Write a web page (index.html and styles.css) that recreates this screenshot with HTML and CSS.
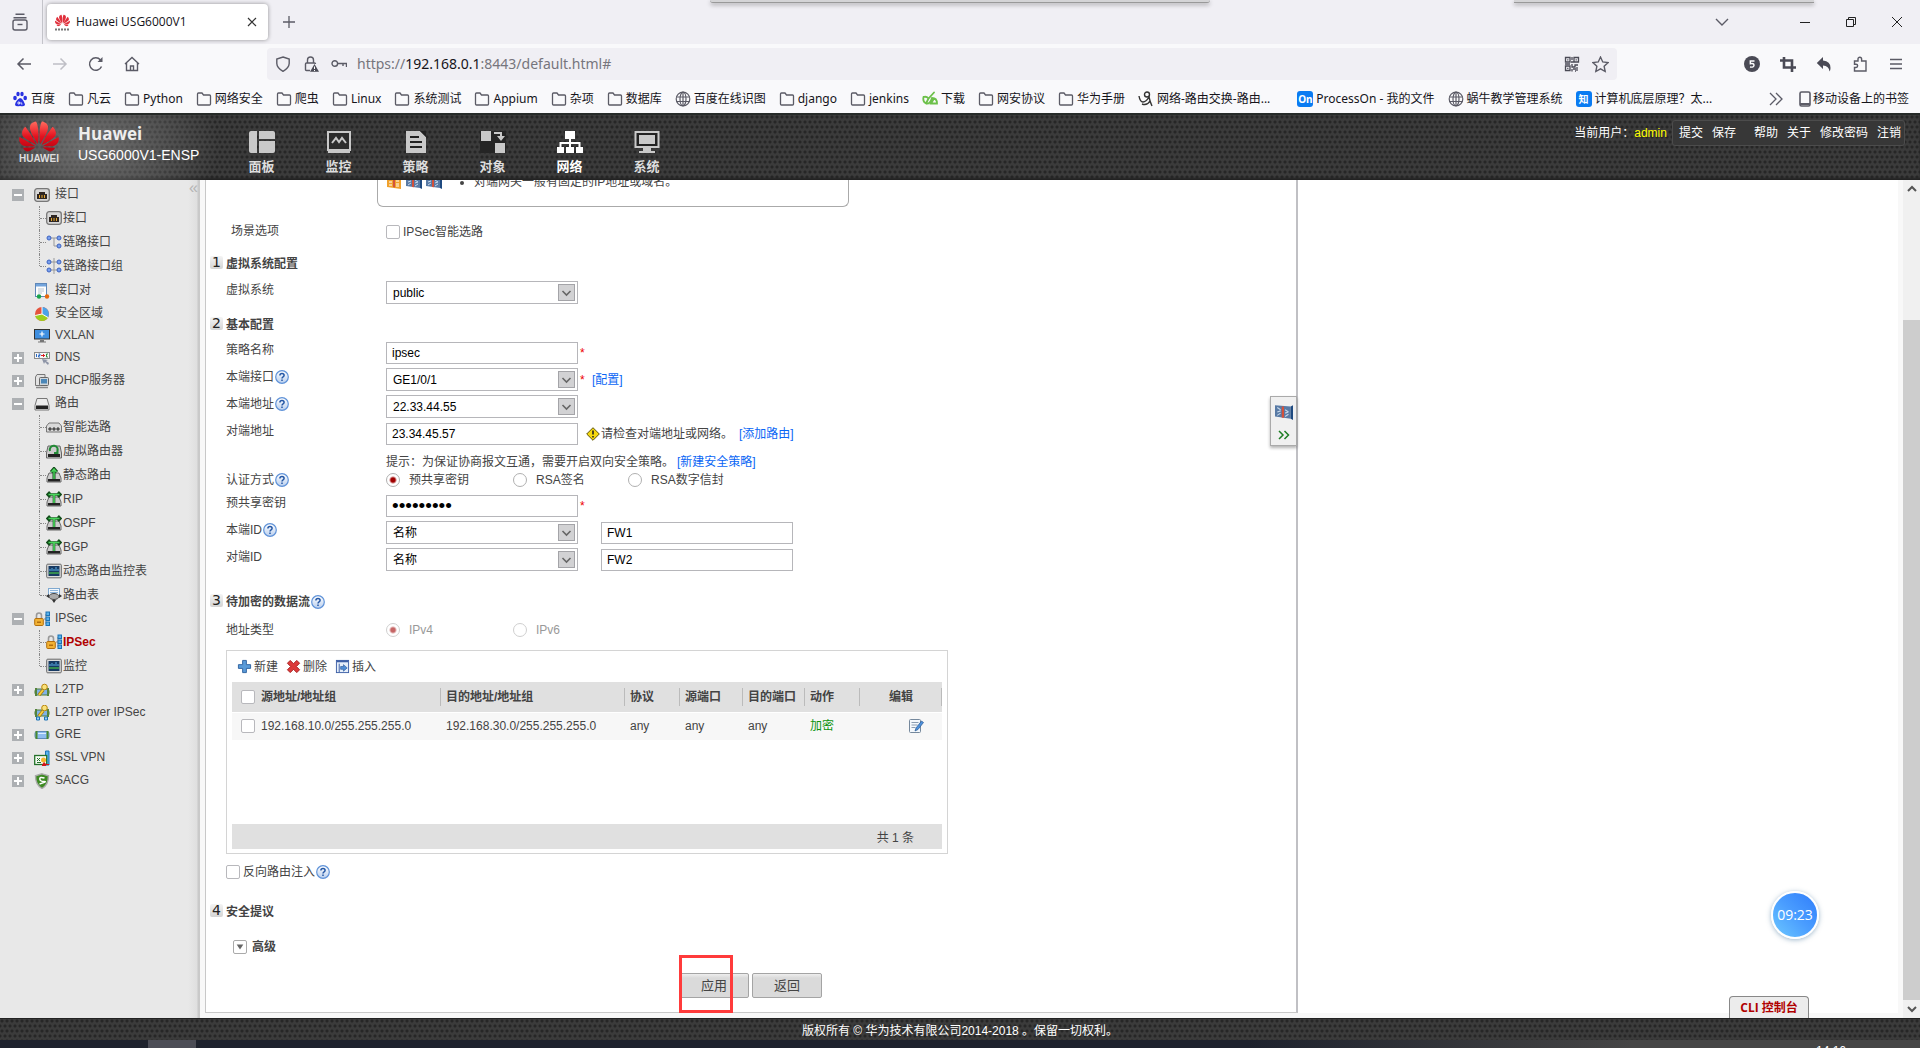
FILE: index.html
```html
<!DOCTYPE html>
<html lang="zh-CN">
<head>
<meta charset="utf-8">
<title>Huawei USG6000V1</title>
<link rel="stylesheet" href="styles.css">
</head>
<body>
<svg class="defs" aria-hidden="true">
  <linearGradient id="redGrad" x1="0" y1="0" x2="0" y2="1"><stop offset="0" stop-color="#ff6a5e"/><stop offset=".5" stop-color="#e3121f"/><stop offset="1" stop-color="#b8000f"/></linearGradient>
  <linearGradient id="helpGrad" x1="0" y1="0" x2="0" y2="1"><stop offset="0" stop-color="#fff"/><stop offset="1" stop-color="#b9cfee"/></linearGradient>
  <symbol id="huawei" viewBox="0 2 24 20"><path d="M3.67 6.14S1.82 7.91 1.72 9.78v.35c.08 1.51 1.22 2.4 1.22 2.4 1.83 1.79 6.26 4.04 7.3 4.55 0 0 .06.03.1-.01l.02-.04v-.04C7.52 10.8 3.67 6.14 3.67 6.14zM9.65 18.6c-.02-.08-.1-.08-.1-.08l-7.38.26c.8 1.43 2.15 2.53 3.56 2.2.96-.25 3.16-1.78 3.88-2.3.06-.05.04-.09.04-.09zm.08-.78C6.49 15.63.21 12.28.21 12.28c-.15.46-.2.9-.21 1.3v.07c0 1.07.4 1.82.4 1.82.8 1.69 2.34 2.2 2.34 2.2.7.3 1.4.31 1.4.31.12.02 4.4 0 5.54 0 .05 0 .08-.05.08-.05v-.06c0-.03-.03-.05-.03-.05zM9.06 3.19a3.42 3.42 0 00-2.57 3.15v.41c.03.6.16 1.05.16 1.05.66 2.9 3.86 7.65 4.55 8.65.05.05.1.03.1.03a.1.1 0 00.06-.1c1.06-10.6-1.11-13.42-1.11-13.42-.32.02-1.19.23-1.19.23zm8.299 2.27s-.49-1.8-2.44-2.28c0 0-.57-.14-1.17-.22 0 0-2.18 2.81-1.12 13.43.01.07.06.08.06.08.07.03.1-.03.1-.03.72-1.03 3.9-5.76 4.55-8.64 0 0 .36-1.4.02-2.34zm-2.92 13.07s-.07 0-.09.05c0 0-.01.07.03.1.7.51 2.85 2 3.88 2.3 0 0 .16.05.43.06h.14c.69-.02 1.9-.37 3-2.26l-7.4-.25zm7.83-8.41c.14-2.06-1.94-3.97-1.94-3.98 0 0-3.85 4.66-6.67 10.8 0 0-.03.08.02.13l.04.01h.06c1.06-.53 5.46-2.77 7.28-4.54 0 0 1.15-.93 1.21-2.42zm1.52 2.14s-6.28 3.37-9.52 5.55c0 0-.05.04-.03.11 0 0 .03.06.07.06 1.16 0 5.56 0 5.67-.02 0 0 .57-.02 1.27-.29 0 0 1.56-.5 2.37-2.27 0 0 .73-1.45.17-3.14z"/></symbol>
  <symbol id="folder" viewBox="0 0 16 16"><path d="M1.500 13V3Q1.500 2 2.500 2H6l1.500 2H13.500q1 0 1 1v8q0 1-1 1h-11q-1 0-1-1z" fill="none" stroke="#5b5b66" stroke-width="1.300"/></symbol>
  <symbol id="globe" viewBox="0 0 16 16"><g fill="none" stroke="#5b5b66" stroke-width="1.200"><circle cx="8" cy="8" r="6.800"/><ellipse cx="8" cy="8" rx="3" ry="6.800"/><path d="M1.500 6h13M1.500 10.500h13M8 1v14"/></g></symbol>
  <symbol id="help" viewBox="0 0 14 14"><circle cx="7" cy="7" r="6.300" fill="url(#helpGrad)" stroke="#5f92d8" stroke-width="1.200"/><path d="M4.900 5.500Q4.900 3.500 7 3.500t2.100 1.800q0 1-1 1.600T7 8.500M7 9.500v1.400" fill="none" stroke="#2457a5" stroke-width="1.500"/></symbol>
  <symbol id="chev" viewBox="0 0 17 17"><rect x=".5" y=".5" width="16" height="16" fill="#d2d2d4" stroke="#a4a4a8"/><path d="M4.500 7l4 4 4-4" fill="none" stroke="#666" stroke-width="1.600"/></symbol>
  <symbol id="port" viewBox="0 0 16 16"><rect x=".7" y="1.700" width="14.600" height="12.600" rx="2.500" fill="#d7d7d7" stroke="#777" stroke-width="1.300"/><path d="M3 12V7h2V5h6v2h2v5z" fill="#2e2622"/><path d="M5.500 8v3M8 8v3M10.500 8v3" stroke="#e9a92d"/></symbol>
  <symbol id="links" viewBox="0 0 16 16"><path d="M3 4h9M8 4v8h5" fill="none" stroke="#999"/><g fill="#7aa0ee" stroke="#3c62c0"><circle cx="3" cy="4" r="2"/><circle cx="13" cy="4" r="2"/><circle cx="13" cy="12" r="2"/></g></symbol>
  <symbol id="linkg" viewBox="0 0 16 16"><path d="M3 4h10M3 12h10M8 0v16" fill="none" stroke="#999"/><g fill="#7aa0ee" stroke="#3c62c0"><circle cx="3" cy="4" r="2"/><circle cx="13" cy="4" r="2"/><circle cx="3" cy="12" r="2"/><circle cx="13" cy="12" r="2"/></g></symbol>
  <symbol id="pair" viewBox="0 0 16 16"><rect x="1.500" y=".5" width="11" height="13" fill="#fdfdfd" stroke="#5f88b9"/><path d="M2 1h10v2.500H2z" fill="#73a4dc"/><path d="M4 6h6M4 8h6M4 10h4" stroke="#b9c4d0"/><circle cx="5" cy="13.500" r="2.200" fill="#18a34a"/><circle cx="13" cy="13.500" r="2.200" fill="#e8680c"/></symbol>
  <symbol id="pie" viewBox="0 0 16 16"><circle cx="8" cy="8" r="7" fill="#e5533c"/><path d="M8 8V1a7 7 0 0 1 6 10.500z" fill="#4aa3e8"/><path d="M8 8l6 3.500A7 7 0 0 1 1.200 9.500z" fill="#9bcf1c"/><path d="M8 1v7l6 3.500M8 8L1.200 9.500" stroke="#fff" fill="none"/></symbol>
  <symbol id="screenp" viewBox="0 0 16 16"><rect x=".5" y="1.500" width="15" height="9.500" fill="#3f8fe0" stroke="#333"/><path d="M8 3.500v5M5.500 6h5" stroke="#fff" stroke-width="1.200"/><path d="M6 12h4v1.500h2v1H4v-1h2z" fill="#777"/></symbol>
  <symbol id="dns" viewBox="0 0 16 16"><rect x=".5" y="2.500" width="15" height="6" fill="#f6f6f6" stroke="#8a8a8a"/><path d="M2.500 4v3M4.500 4h1.500v1.500H4.500V7H6" stroke="#2b6bc5" fill="none"/><path d="M7 5.500h4M9.500 4v3" stroke="#d22"/><path d="M14 4h-1.500v3H14" stroke="#2c8c3a" fill="none"/><path d="M8 9l2 5 1-2 3 3 1-2-3-2 2-1z" fill="#8d94a6"/></symbol>
  <symbol id="dhcp" viewBox="0 0 16 16"><path d="M3 1.500h8v11H1.500V4z" fill="#e2e2e2" stroke="#777"/><rect x="5.500" y="4.500" width="9" height="8" rx="1" fill="#d0d6da" stroke="#666"/><rect x="7" y="6" width="6" height="4.500" fill="#4b87b8"/><path d="M2 14.500h12" stroke="#888" stroke-width="1.500"/></symbol>
  <symbol id="router" viewBox="0 0 16 16"><path d="M3 2.500h10l2 7v4.500H1V9.500z" fill="#ececec" stroke="#777"/><path d="M2 9.500h12v3.500H2z" fill="#222"/></symbol>
  <symbol id="smart" viewBox="0 0 16 16"><path d="M3 4h10l2.500 3v6H.5V7z" fill="#dadada" stroke="#777"/><path d="M3 9h2v2H3zM7 9h2v2H7zM11 9h2v2h-2z" stroke="#333" fill="#aaa"/></symbol>
  <symbol id="vrouter" viewBox="0 0 16 16"><path d="M2 3h12l1.500 7v5H.5v-5z" fill="#ccc" stroke="#666"/><path d="M2 11h12v3H2z" fill="#222"/><path d="M4 8a4 4 0 1 1 7 1M8 10l3.500 0V6" fill="none" stroke="#218a35" stroke-width="2"/></symbol>
  <symbol id="sroute" viewBox="0 0 16 16"><path d="M3 6h10l2 5v4H1v-4z" fill="#ccc" stroke="#666"/><path d="M2 12h12v2.500H2z" fill="#222"/><path d="M8 12V3M5 5l3-3.500L11 5" fill="none" stroke="#134d1b" stroke-width="3"/><path d="M8 12V3M5.500 5L8 2l2.500 3" fill="none" stroke="#49d65b" stroke-width="1.400"/></symbol>
  <symbol id="droute" viewBox="0 0 16 16"><path d="M3 6h10l2 5v4H1v-4z" fill="#ccc" stroke="#666"/><path d="M2 12h12v2.500H2z" fill="#222"/><path d="M8 12V5M2 3.500h12M4 1L1.500 3.500 4 6M12 1l2.500 2.500L12 6" fill="none" stroke="#134d1b" stroke-width="2.600"/><path d="M8 12V4M2.500 3.500h11" fill="none" stroke="#49d65b" stroke-width="1.600"/></symbol>
  <symbol id="mon" viewBox="0 0 16 16"><rect x=".7" y="1.200" width="14.600" height="13.600" rx="1" fill="#ddd" stroke="#666"/><rect x="2.500" y="3" width="11" height="10" fill="#173a63"/><path d="M3 10h10" stroke="#41b04a" stroke-width="1.400"/><path d="M4 8V6M6 8V5M8 8V6M10 8V4M12 8V6" stroke="#5cb0e8"/></symbol>
  <symbol id="rtable" viewBox="0 0 16 16"><rect x="2.500" y="1.500" width="11" height="8" fill="#f4f8fc" stroke="#7fa9d0"/><path d="M4 3.500h8M4 5.500h8" stroke="#8cb5dc"/><ellipse cx="8" cy="9.500" rx="5" ry="3" fill="#aaa" stroke="#444"/><path d="M0 9l3-2v4zM16 9l-3-2v4zM8 16l-2-3h4z" fill="#333"/></symbol>
  <symbol id="lock" viewBox="0 0 16 16"><path d="M2.500 8V4.500a2.500 2.500 0 0 1 5 0V8" fill="none" stroke="#999" stroke-width="1.600"/><rect x=".7" y="7.500" width="8.600" height="7" rx="1" fill="#f2b234" stroke="#b36f0e"/><path d="M3 10.500h4v1.500H3z" fill="#b36f0e"/><path d="M10 8h2M12 3v10" stroke="#888"/><g fill="#58b2ec" stroke="#1b72b5"><rect x="12" y="1" width="3.500" height="3.500"/><rect x="12" y="6" width="3.500" height="3.500"/><rect x="12" y="11" width="3.500" height="3.500"/></g></symbol>
  <symbol id="l2tp" viewBox="0 0 16 16"><rect x="1" y="7" width="14" height="6" rx="2" fill="#7fb2ea" stroke="#4f7d3a"/><path d="M2 6v8M14 6v8" stroke="#55843c" stroke-width="2"/><path d="M5 13l4-5" stroke="#a8780b" stroke-width="3.500"/><path d="M5 13l4-5" stroke="#f6cf3d" stroke-width="2"/><circle cx="10.500" cy="5" r="2.800" fill="#f9e27a" stroke="#b9860d"/></symbol>
  <symbol id="l2ipsec" viewBox="0 0 16 16"><use href="#l2tp" y="-2" width="16" height="16"/><path d="M2.500 12h3v3h-3zM10.500 12h3v3h-3z" fill="#9bd2f4" stroke="#1b72b5"/></symbol>
  <symbol id="gre" viewBox="0 0 16 16"><rect x="1" y="4.500" width="14" height="7" rx="2" fill="#8fbcf0" stroke="#5f89bb"/><path d="M2.500 4v8M13.500 4v8" stroke="#4a8a2e" stroke-width="2"/><path d="M4 6.500h8" stroke="#dcecff"/></symbol>
  <symbol id="ssl" viewBox="0 0 16 16"><path d="M11.500 1h3.500v14h-3.500z" fill="#58b2ec" stroke="#1b72b5"/><rect x=".7" y="5.500" width="12" height="9" fill="#f6fbf4" stroke="#25722a" stroke-width="1.300"/><path d="M3 8l3 3M6 8l-3 3M3 12.500h4" stroke="#25722a"/><circle cx="9.500" cy="10" r="2.500" fill="#f5b62a"/><path d="M8 15l2-3 2 2h3v1h-3v1H8z" fill="#d3141a"/></symbol>
  <symbol id="sacg" viewBox="0 0 16 16"><path d="M8 .8l6.500 2Q14.500 12 8 15.500 1.500 12 1.500 2.800z" fill="#3d8a22" stroke="#aaa" stroke-width="1.400"/><path d="M10.500 5Q5.500 3.500 5.800 6T10 8.500 5.500 11" fill="none" stroke="#fff" stroke-width="1.500"/></symbol>
  <symbol id="wall" viewBox="0 0 16 16"><path d="M0 2l14 1v11L0 12z" fill="#587aa5"/><path d="M14 3l2-1v13l-2-1z" fill="#1f4a80"/><path d="M2 4l3 2M2 8l3-1M2 11l3-2M9 6l3 2M9 9l3-1M9 12l3-2" stroke="#c7d8ea"/><path d="M6 3l2 .2v10L6 13z" fill="#d4513b"/></symbol>
  <symbol id="wallo" viewBox="0 0 16 16"><path d="M1 2l14 2v11L1 13z" fill="#f0a12c"/><path d="M3 5h3M3 8h3M3 11h3M10 7h3M10 10h3M10 12h3" stroke="#fff"/><path d="M7 4l2 .5v9L7 13z" fill="#d4513b"/></symbol>
</svg>

<header class="browser">
  <div class="tabbar">
    <button class="recent" aria-label="最近浏览"><svg width="18" height="18" viewBox="0 0 18 18" fill="none" stroke="#5b5b66" stroke-width="1.400"><path d="M4.500 1.200h9M2.500 4.700h13"/><rect x="2" y="7" width="14" height="10" rx="2"/><path d="M6.500 11.500h5"/></svg></button>
    <div class="tab">
      <svg class="fav" width="17" height="17" viewBox="0 0 17 17"><use href="#huawei" x="1" y="0" width="15" height="13" fill="#e0303c"/><path d="M1 15.500h15" stroke="#777" stroke-width="2" stroke-dasharray="2 1"/></svg>
      <span class="tabtitle">Huawei USG6000V1</span>
      <button class="plain" aria-label="关闭标签页"><svg width="12" height="12" viewBox="0 0 12 12" stroke="#333" stroke-width="1.200"><path d="M2 2l8 8M10 2l-8 8"/></svg></button>
    </div>
    <button class="plain newtab" aria-label="新标签页"><svg width="14" height="14" viewBox="0 0 14 14" stroke="#5b5b66" stroke-width="1.300"><path d="M7 1v12M1 7h12"/></svg></button>
    <div class="winctl">
      <svg class="alltabs" width="14" height="14" viewBox="0 0 14 14" fill="none" stroke="#5b5b66" stroke-width="1.400"><path d="M1 4l6 6 6-6"/></svg>
      <svg width="12" height="12" viewBox="0 0 12 12" stroke="#222"><path d="M1 6.500h10"/></svg>
      <svg width="12" height="12" viewBox="0 0 12 12" fill="none" stroke="#222"><path d="M1.500 3.500h7v7h-7zM3.500 3V1.500h7v7H9"/></svg>
      <svg width="12" height="12" viewBox="0 0 12 12" stroke="#222"><path d="M1 1l10 10M11 1L1 11"/></svg>
    </div>
    <i class="edge edge-a"></i><i class="edge edge-b"></i>
  </div>
  <div class="toolbar">
    <div class="navbtns">
      <svg width="16" height="16" viewBox="0 0 16 16" fill="none" stroke="#5b5b66" stroke-width="1.500"><path d="M15 8H2M7.500 2.500L2 8l5.500 5.500"/></svg>
      <svg width="16" height="16" viewBox="0 0 16 16" fill="none" stroke="#bfbfc6" stroke-width="1.500"><path d="M1 8h13M8.500 2.500L14 8l-5.500 5.500"/></svg>
      <svg width="16" height="16" viewBox="0 0 16 16" fill="none" stroke="#5b5b66" stroke-width="1.500"><path d="M13.500 10.500A6.200 6.200 0 1 1 12.500 4"/><path d="M14.500 1v5h-5z" fill="#5b5b66" stroke="none"/></svg>
      <svg width="16" height="16" viewBox="0 0 16 16" fill="none" stroke="#5b5b66" stroke-width="1.400"><path d="M1 8l7-6.500L15 8M2.500 7v7.500h11V7M6.500 14.500V10h3v4.500"/></svg>
    </div>
    <div class="urlbar">
      <svg width="16" height="16" viewBox="0 0 16 16" fill="none" stroke="#5b5b66" stroke-width="1.400"><path d="M8 1l6.200 2v4.500Q14 12 8 15.300 2 12 1.800 7.500V3z"/></svg>
      <svg width="16" height="16" viewBox="0 0 16 16" fill="none" stroke="#5b5b66" stroke-width="1.400"><path d="M4.500 7V4a3 3 0 0 1 6 0v3M7 14.500H3.500q-1 0-1-1V8q0-1 1-1h8q1 0 1 1"/><path d="M11.500 8L16 15.700H7z" fill="#4a4a55" stroke="none"/><path d="M11.500 10.500v2.500M11.500 14v1" stroke="#fff" stroke-width="1"/></svg>
      <svg width="16" height="16" viewBox="0 0 16 16" fill="none" stroke="#5b5b66" stroke-width="1.400"><circle cx="3.800" cy="7.500" r="2.800"/><path d="M6.500 7.500h9V11M12 7.500V10"/></svg>
      <span class="url">https://<b>192.168.0.1</b>:8443/default.html#</span>
      <svg width="16" height="16" viewBox="0 0 16 16" fill="none" stroke="#4a4a55" stroke-width="1.300"><path d="M1.500 1.500h4.500v4.500H1.500zM10 1.500h4.500v4.500H10zM1.500 10h4.500v4.500H1.500zM3.200 3.800h1.200M11.600 3.800h1.200M3.200 12.300h1.200M8 1v3M7 6h3M1 8h5M8 8v3h3V9h3M9 13h3M13 11v4M8 13v2.500M11 15h1"/></svg>
      <svg class="star" width="17" height="17" viewBox="0 0 16 16" fill="none" stroke="#5b5b66" stroke-width="1.300"><path d="M8 1l2.100 4.600 5 .6-3.700 3.400 1 5L8 12.100l-4.400 2.500 1-5L.9 6.200l5-.6z"/></svg>
    </div>
    <div class="exts">
      <svg width="16" height="16" viewBox="0 0 16 16"><circle cx="8" cy="8" r="8" fill="#4a4a55"/><path d="M10.500 5H6.300v2.700Q10 7 10 9.300T6 11" fill="none" stroke="#fff" stroke-width="1.400"/></svg>
      <svg width="16" height="16" viewBox="0 0 16 16" fill="none" stroke="#4a4a55" stroke-width="2.600"><path d="M4 1v10.500h12M0 4.500h12V16"/></svg>
      <svg width="16" height="16" viewBox="0 0 16 16"><path d="M7 1v3.500q7.500.5 7.500 7.500 0 2-1 3.500Q13 10 7 9.500V13L.8 7z" fill="#4a4a55"/></svg>
      <svg width="16" height="16" viewBox="0 0 16 16" fill="none" stroke="#5b5b66" stroke-width="1.400"><path d="M2.500 5H6V3a1.800 1.800 0 0 1 3.600 0v2H14v10H2.500v-3.500H4a1.600 1.600 0 0 0 0-3.300H2.500z"/></svg>
      <svg width="16" height="16" viewBox="0 0 16 16" stroke="#5b5b66" stroke-width="1.300"><path d="M2 3.500h12M2 8h12M2 12.500h12"/></svg>
    </div>
  </div>
  <nav class="bookmarks">
    <a href="#"><svg viewBox="0 0 16 16"><g fill="#2932e1"><ellipse cx="3" cy="7" rx="1.800" ry="2.300"/><ellipse cx="6" cy="3" rx="1.700" ry="2.300"/><ellipse cx="10" cy="3" rx="1.700" ry="2.300"/><ellipse cx="13.200" cy="7" rx="1.800" ry="2.300"/><path d="M8 7q2 0 3.500 3t1.500 4q-1 2-5 1-4 1-5-1 0-2 1.500-4T8 7z"/></g><path d="M6 11v2h1.500v-2zM9 11v2h1.500" stroke="#fff" fill="none" stroke-width=".8"/></svg>百度</a>
    <a href="#"><svg><use href="#folder"/></svg>凡云</a>
    <a href="#"><svg><use href="#folder"/></svg>Python</a>
    <a href="#"><svg><use href="#folder"/></svg>网络安全</a>
    <a href="#"><svg><use href="#folder"/></svg>爬虫</a>
    <a href="#"><svg><use href="#folder"/></svg>Linux</a>
    <a href="#"><svg><use href="#folder"/></svg>系统测试</a>
    <a href="#"><svg><use href="#folder"/></svg>Appium</a>
    <a href="#"><svg><use href="#folder"/></svg>杂项</a>
    <a href="#"><svg><use href="#folder"/></svg>数据库</a>
    <a href="#"><svg><use href="#globe"/></svg>百度在线识图</a>
    <a href="#"><svg><use href="#folder"/></svg>django</a>
    <a href="#"><svg><use href="#folder"/></svg>jenkins</a>
    <a href="#"><svg viewBox="0 0 16 16" fill="none" stroke="#6cc04a" stroke-width="1.800" stroke-linecap="round"><path d="M1.500 6q3-1 5 1.500L12 1.500M1.500 6q-1 5 2.500 6.500L6.500 7.500M4 12.500q4 1 6-5.500 5 0 5 5.500H9l3-5"/></svg>下载</a>
    <a href="#"><svg><use href="#folder"/></svg>网安协议</a>
    <a href="#"><svg><use href="#folder"/></svg>华为手册</a>
    <a href="#"><svg viewBox="0 0 16 16" fill="none" stroke="#333" stroke-width="1.400"><circle cx="9" cy="3.500" r="2.500"/><path d="M1 5q1 6 4 6t6-5q1 5 3 9M4 13q5 2 8-3"/></svg>网络-路由交换-路由...</a>
    <a href="#" class="wide"><span class="tile">On</span>ProcessOn - 我的文件</a>
    <a href="#"><svg><use href="#globe"/></svg>蜗牛教学管理系统</a>
    <a href="#"><span class="tile">知</span>计算机底层原理？太...</a>
    <svg class="more" viewBox="0 0 16 16" fill="none" stroke="#5b5b66" stroke-width="1.300"><path d="M2 2l6 6-6 6M8 2l6 6-6 6"/></svg>
    <a href="#" class="mobile"><svg viewBox="0 0 16 16"><rect x="3" y="1" width="10" height="14" rx="1.500" fill="none" stroke="#5b5b66" stroke-width="1.600"/><path d="M3 13h10" stroke="#5b5b66" stroke-width="2"/></svg>移动设备上的书签</a>
  </nav>
</header>

<header class="banner">
  <div class="logo"><svg width="40" height="33"><use href="#huawei" fill="url(#redGrad)"/></svg><span>HUAWEI</span></div>
  <div class="product"><strong>Huawei</strong><span>USG6000V1-ENSP</span></div>
  <nav class="mainnav">
    <a href="#"><svg viewBox="0 0 26 22" fill="#c9c9c9"><path d="M0 2q0-2 2-2h6v22H2q-2 0-2-2zM10 0h14q2 0 2 2v6H10zM10 10h16v10q0 2-2 2H10z"/></svg>面板</a>
    <a href="#"><svg viewBox="0 0 26 22" fill="none" stroke="#c9c9c9" stroke-width="2"><path d="M2 1h22v18H2z" fill="#2c2c2c"/><path d="M2 21h22M6 12l4-5 3 4 3-4 4 5"/></svg>监控</a>
    <a href="#"><svg viewBox="0 0 26 22"><path d="M3 0h14l6 6v16H3z" fill="#c9c9c9"/><path d="M17 0h6v6z" fill="#222"/><path d="M7 6h9M7 11h12M7 16h12" stroke="#222" stroke-width="2"/></svg>策略</a>
    <a href="#"><svg viewBox="0 0 26 22" fill="#c9c9c9"><path d="M0 0h26v22H0z" fill="#252525"/><path d="M1 0h10v10H1zM15 12h10v10H15zM14 1h8v4h3l-4 5-4-5h3V3h-6z"/></svg>对象</a>
    <a href="#" class="on"><svg viewBox="0 0 26 22" fill="#fff"><path d="M8 0h10v8H8zM0 16h7v6H0zM9 16h8v6H9zM19 16h7v6h-7z"/><path d="M13 8v8M3.500 16v-4h19v4" fill="none" stroke="#fff" stroke-width="2"/></svg>网络</a>
    <a href="#"><svg viewBox="0 0 26 22"><path d="M1.500 1h23v15h-23z" fill="#222" stroke="#c9c9c9" stroke-width="2"/><path d="M5 4h16v9H5zM9 17h8v3h4v2H5v-2h4z" fill="#c9c9c9"/></svg>系统</a>
  </nav>
  <div class="user"><span>当前用户：<em>admin</em></span>
    <div class="userlinks"><a href="#">提交</a><a href="#">保存</a><a href="#" class="sep">帮助</a><a href="#">关于</a><a href="#">修改密码</a><a href="#">注销</a></div>
  </div>
</header>

<main class="workspace">
  <aside class="sidebar">
    <button class="collapse" aria-label="收起">«</button>
    <ul class="tree">
      <li><a href="#"><i class="tg minus"></i><svg><use href="#port"/></svg>接口</a>
        <ul><li><a href="#"><svg><use href="#port"/></svg>接口</a></li><li><a href="#"><svg><use href="#links"/></svg>链路接口</a></li><li><a href="#"><svg><use href="#linkg"/></svg>链路接口组</a></li></ul></li>
      <li><a href="#"><i class="tg none"></i><svg><use href="#pair"/></svg>接口对</a></li>
      <li><a href="#"><i class="tg none"></i><svg><use href="#pie"/></svg>安全区域</a></li>
      <li><a href="#" class="lat"><i class="tg none"></i><svg><use href="#screenp"/></svg>VXLAN</a></li>
      <li><a href="#" class="lat"><i class="tg plus"></i><svg><use href="#dns"/></svg>DNS</a></li>
      <li><a href="#"><i class="tg plus"></i><svg><use href="#dhcp"/></svg>DHCP服务器</a></li>
      <li><a href="#"><i class="tg minus"></i><svg><use href="#router"/></svg>路由</a>
        <ul><li><a href="#"><svg><use href="#smart"/></svg>智能选路</a></li><li><a href="#"><svg><use href="#vrouter"/></svg>虚拟路由器</a></li><li><a href="#"><svg><use href="#sroute"/></svg>静态路由</a></li><li><a href="#"><svg><use href="#droute"/></svg>RIP</a></li><li><a href="#"><svg><use href="#droute"/></svg>OSPF</a></li><li><a href="#"><svg><use href="#droute"/></svg>BGP</a></li><li><a href="#"><svg><use href="#mon"/></svg>动态路由监控表</a></li><li><a href="#"><svg><use href="#rtable"/></svg>路由表</a></li></ul></li>
      <li><a href="#" class="lat"><i class="tg minus"></i><svg><use href="#lock"/></svg>IPSec</a>
        <ul><li><a href="#" class="cur"><svg><use href="#lock"/></svg>IPSec</a></li><li><a href="#"><svg><use href="#mon"/></svg>监控</a></li></ul></li>
      <li><a href="#" class="lat"><i class="tg plus"></i><svg><use href="#l2tp"/></svg>L2TP</a></li>
      <li><a href="#"><i class="tg none"></i><svg><use href="#l2ipsec"/></svg>L2TP over IPSec</a></li>
      <li><a href="#" class="lat"><i class="tg plus"></i><svg><use href="#gre"/></svg>GRE</a></li>
      <li><a href="#"><i class="tg plus"></i><svg><use href="#ssl"/></svg>SSL VPN</a></li>
      <li><a href="#"><i class="tg plus"></i><svg><use href="#sacg"/></svg>SACG</a></li>
    </ul>
  </aside>

  <section class="content">
    <form class="pane" onsubmit="return false">
      <div class="scenario"><svg><use href="#wallo"/></svg><svg><use href="#wall"/></svg><svg><use href="#wall"/></svg><ul><li>对端网关一般有固定的IP地址或域名。</li></ul></div>

      <div class="row line scene"><span class="label">场景选项</span><input type="checkbox" id="smartsel"><label for="smartsel">IPSec智能选路</label></div>

      <h2 class="s1"><span class="num">1</span>虚拟系统配置</h2>
      <div class="row"><label class="label" for="vsys">虚拟系统</label><span class="sel"><select id="vsys"><option>public</option></select><svg><use href="#chev"/></svg></span></div>

      <h2 class="s2"><span class="num">2</span>基本配置</h2>
      <div class="row"><label class="label" for="pname">策略名称</label><input type="text" id="pname" value="ipsec"><span class="req">*</span></div>
      <div class="row"><label class="label" for="lif">本端接口<svg><use href="#help"/></svg></label><span class="sel"><select id="lif"><option>GE1/0/1</option></select><svg><use href="#chev"/></svg></span><span class="req">*</span><a class="link" href="#">[配置]</a></div>
      <div class="row"><label class="label" for="laddr">本端地址<svg><use href="#help"/></svg></label><span class="sel"><select id="laddr"><option>22.33.44.55</option></select><svg><use href="#chev"/></svg></span></div>
      <div class="row"><label class="label" for="raddr">对端地址</label><input type="text" id="raddr" value="23.34.45.57"><svg class="warn" viewBox="0 0 14 14"><path d="M7 .7L13.300 7 7 13.300.7 7z" fill="#f5d80e" stroke="#5b5208"/><path d="M7 3.500v4M7 9v1.500" stroke="#222" stroke-width="1.600"/></svg><span>请检查对端地址或网络。</span><a class="link near" href="#">[添加路由]</a></div>
      <div class="hint">提示：为保证协商报文互通，需要开启双向安全策略。<a class="link" href="#">[新建安全策略]</a></div>
      <div class="row radios"><span class="label">认证方式<svg><use href="#help"/></svg></span>
        <label class="w1"><input type="radio" name="auth" checked>预共享密钥</label><label class="w2"><input type="radio" name="auth">RSA签名</label><label><input type="radio" name="auth">RSA数字信封</label></div>
      <div class="row psk"><label class="label" for="psk">预共享密钥</label><input type="password" id="psk" value="Admin@123"><span class="req">*</span></div>
      <div class="row"><label class="label" for="lid">本端ID<svg><use href="#help"/></svg></label><span class="sel"><select id="lid"><option>名称</option></select><svg><use href="#chev"/></svg></span><input type="text" class="second" value="FW1" aria-label="本端ID"></div>
      <div class="row"><label class="label" for="rid">对端ID</label><span class="sel"><select id="rid"><option>名称</option></select><svg><use href="#chev"/></svg></span><input type="text" class="second" value="FW2" aria-label="对端ID"></div>

      <h2 class="s3"><span class="num">3</span>待加密的数据流<svg><use href="#help"/></svg></h2>
      <div class="row radios addrtype"><span class="label">地址类型</span><label class="w1"><input type="radio" name="ipv" checked disabled>IPv4</label><label><input type="radio" name="ipv" disabled>IPv6</label></div>

      <div class="panel">
        <div class="tools">
          <button type="button"><svg viewBox="0 0 16 16"><path d="M6 1.500h4V6h4.500v4H10v4.500H6V10H1.500V6H6z" fill="#5a9bd8" stroke="#2e62a0"/></svg>新建</button>
          <button type="button"><svg viewBox="0 0 16 16"><path d="M4.500 1.500L8 5l3.500-3.500 3 3L11 8l3.500 3.500-3 3L8 11l-3.500 3.500-3-3L5 8 1.500 4.500z" fill="#dd3a3a" stroke="#a31d1d"/></svg>删除</button>
          <button type="button"><svg viewBox="0 0 16 16"><rect x="1.500" y="1.500" width="13" height="13" fill="#e6effa" stroke="#3c5ea5"/><path d="M2 2.500h12" stroke="#3c5ea5" stroke-width="2"/><path d="M4.500 5v9" stroke="#3c5ea5"/><path d="M6 8h3V6l4 3.500L9 13v-2H6z" fill="#4f8ed6" stroke="#2e5a9c" stroke-width=".7"/></svg>插入</button>
        </div>
        <div class="gridbody">
        <table>
          <colgroup><col class="c1"><col class="c2"><col class="c3"><col class="c4"><col class="c5"><col class="c6"><col class="c7"></colgroup>
          <thead><tr><th><span><input type="checkbox" aria-label="全选">源地址/地址组</span></th><th><span>目的地址/地址组</span></th><th><span>协议</span></th><th><span>源端口</span></th><th><span>目的端口</span></th><th><span>动作</span></th><th><span class="mid">编辑</span></th></tr></thead>
          <tbody><tr><td><span><input type="checkbox" aria-label="选择">192.168.10.0/255.255.255.0</span></td><td>192.168.30.0/255.255.255.0</td><td>any</td><td>any</td><td>any</td><td class="green">加密</td><td class="edit"><button type="button" aria-label="编辑"><svg viewBox="0 0 16 16"><rect x="1.500" y="1.500" width="11" height="13" rx="1" fill="#f4f8fc" stroke="#75889c"/><path d="M3.500 4.500h7M3.500 7h6M3.500 9.500h4" stroke="#8a9db2"/><path d="M7 13l1-3 5.500-7 2 1.500L10 11.500z" fill="#4c90dc" stroke="#2b5a94" stroke-width=".7"/></svg></button></td></tr></tbody>
        </table>
        </div>
        <div class="total">共 1 条</div>
      </div>

      <div class="inject"><input type="checkbox" id="rri"><label for="rri">反向路由注入</label><svg><use href="#help"/></svg></div>

      <h2 class="s4"><span class="num">4</span>安全提议</h2>
      <div class="adv"><button type="button" aria-label="展开"><svg viewBox="0 0 12 12"><path d="M2 3h8L6 9z" fill="#666"/></svg></button>高级</div>

      <div class="actions"><button type="button">应用</button><button type="button">返回</button><i class="mark"></i></div>

      <div class="drawer"><svg width="18" height="18"><use href="#wall"/></svg><svg width="12" height="10" viewBox="0 0 12 10" fill="none" stroke="#1c7d22" stroke-width="1.500"><path d="M1 1l4 4-4 4M6.500 1l4 4-4 4"/></svg></div>
    </form>
  </section>

  <div class="scrollbar"><svg viewBox="0 0 10 8"><path d="M1 6l4-4 4 4"/></svg><i></i><svg viewBox="0 0 10 8"><path d="M1 2l4 4 4-4"/></svg></div>
  <div class="ball">09:23</div>
  <button class="cli">CLI 控制台</button>
</main>

<footer class="copyright">版权所有 © 华为技术有限公司2014-2018 。保留一切权利。</footer>
<div class="taskbar"><i></i><span>14:16</span></div>
</body>
</html>
```
FILE: styles.css
```css
* { box-sizing: border-box; }
body { margin: 0; height: 100vh; min-height: 1000px; display: flex; flex-direction: column; overflow: hidden; background: #fff; color: #444; font: 12px/16px "Liberation Sans", "Noto Sans CJK SC", sans-serif; }
a { color: inherit; text-decoration: none; }
button { font: inherit; color: inherit; cursor: pointer; }
ul { margin: 0; padding: 0; list-style: none; }
.defs { position: absolute; width: 0; height: 0; }
.plain, .recent { border: 0; background: none; padding: 0; display: flex; align-items: center; justify-content: center; }

/* browser chrome */
.browser { flex: none; font-family: "Noto Sans", "Noto Sans CJK SC", sans-serif; color: #15141a; background: #f9f9fb; }
.tabbar { position: relative; display: flex; align-items: center; height: 44px; background: #f0eff4; }
.recent { width: 43px; height: 44px; border-right: 1px solid #c4c4ca; padding-right: 3px; }
.tab { display: flex; align-items: center; gap: 5px; width: 221px; height: 36px; margin-left: 4px; padding: 0 10px 0 7px; border-radius: 4px; background: #fff; box-shadow: 0 0 4px rgba(0,0,0,.4); }
.tabtitle { flex: 1; font: 12px/18px "Open Sans", sans-serif; white-space: nowrap; }
.newtab { width: 28px; margin-left: 7px; }
.winctl { margin-left: auto; display: flex; align-items: center; gap: 34px; padding-right: 17px; }
.alltabs { margin-right: 36px; }
.edge { position: absolute; top: 0; height: 3px; background: #d4d4d6; border-bottom: 1px solid #999; box-shadow: 0 2px 4px rgba(0,0,0,.3); }
.edge-a { left: 37%; width: 26%; border-radius: 0 0 3px 3px; }
.edge-b { right: 106px; width: 300px; }
.toolbar { display: flex; align-items: center; height: 40px; }
.navbtns { display: flex; gap: 20px; padding-left: 16px; width: 267px; }
.urlbar { flex: 1; display: flex; align-items: center; gap: 12px; height: 32px; padding: 0 8px; border-radius: 4px; background: #f0eff4; }
.url { flex: 1; margin-left: -2px; font-size: 14px; line-height: 20px; color: #76757d; }
.url b { font-weight: 400; color: #15141a; }
.exts { display: flex; gap: 20px; width: 303px; justify-content: flex-end; padding-right: 16px; }
.bookmarks { display: flex; align-items: center; gap: 13px; height: 29px; padding: 0 11px 0 12px; white-space: nowrap; overflow: hidden; }
.bookmarks a { display: flex; align-items: center; gap: 3px; flex: none; }
.bookmarks svg { width: 16px; height: 16px; flex: none; }
.bookmarks .wide { margin-left: 14px; }
.bookmarks .more { margin-left: auto; }
.bookmarks .mobile { gap: 0; }
.tile { width: 16px; height: 16px; border-radius: 3px; background: #0a7bf2; color: #fff; font: bold 10px/16px "Noto Sans", "Noto Sans CJK SC", sans-serif; text-align: center; }

/* product banner */
.banner, .copyright { background-color: #3b3b3b; background-image: radial-gradient(circle at 2px 2px, #262626 1px, transparent 2px), radial-gradient(circle at 2px 2px, #262626 1px, transparent 2px); background-size: 5px 10px; background-position: 0 0, 3px 5px; }
.banner { position: relative; flex: none; display: flex; height: 67px; border-top: 2px solid #262a28; color: #fff; box-shadow: inset 0 -2px 2px #222; }
.banner::before { content: ""; position: absolute; inset: 0; background: radial-gradient(ellipse 130px 90px at 90px 30px, rgba(170,170,170,.5), transparent); }
.banner > * { position: relative; }
.logo { width: 78px; display: flex; flex-direction: column; align-items: center; padding-top: 5px; }
.logo span { font: bold 10px/12px "Liberation Sans", sans-serif; color: #ddd; }
.product { width: 145px; display: flex; flex-direction: column; padding-top: 9px; white-space: nowrap; }
.product strong { font: bold 17px/20px "Open Sans", sans-serif; color: #eee; }
.product span { font-size: 14px; line-height: 22px; }
.mainnav { display: flex; }
.mainnav a { width: 77px; display: flex; flex-direction: column; align-items: center; gap: 4px; padding-top: 16px; font-weight: bold; font-size: 13px; line-height: 20px; color: #ddd; }
.mainnav svg { width: 26px; height: 22px; }
.mainnav .on { color: #fff; }
.user { margin-left: auto; display: flex; align-items: flex-start; padding: 5px 15px 0 0; line-height: 26px; gap: 5px; }
.user em { font-style: normal; color: #ff0; }
.userlinks { display: flex; gap: 9px; padding: 0 3px 0 6px; height: 26px; line-height: 24px; border: 1px solid #4c4c4c; border-radius: 3px; background: #373737; }
.userlinks .sep { margin-left: 9px; }

/* work area */
.workspace { position: relative; flex: 1; min-height: 0; display: flex; }
.sidebar { position: relative; width: 200px; flex: none; padding-top: 2px; background: linear-gradient(90deg, #e8e8e8 188px, #dfdfdf 197px, #c9c9c9 198px); }
.collapse { position: absolute; right: 2px; top: 0; padding: 0; border: 0; background: none; color: #b5b5b5; font-size: 16px; line-height: 16px; }
.tree a { display: flex; align-items: center; height: 23px; padding-left: 12px; white-space: nowrap; }
.tree .lat { height: 22px; }
.tree svg { width: 16px; height: 16px; margin: 2px 5px 0 0; }
.tg { width: 12px; height: 12px; margin: 2px 10px 0 0; background-color: #adb0b3; background-repeat: no-repeat; background-position: center; }
.tg.minus { background-image: linear-gradient(#fff, #fff); background-size: 8px 2px; }
.tg.plus { background-image: linear-gradient(#fff, #fff), linear-gradient(#fff, #fff); background-size: 8px 2px, 2px 8px; }
.tg.none { background: none; }
.tree ul { padding-top: 1px; }
.tree ul li { position: relative; }
.tree ul a { height: 24px; padding-left: 46px; }
.tree ul svg { margin: 0 1px 0 0; }
.tree ul li::before { content: ""; position: absolute; left: 39px; top: 0; height: 24px; border-left: 1px dotted #888; }
.tree ul li:last-child::before { height: 12px; }
.tree ul li::after { content: ""; position: absolute; left: 40px; top: 12px; width: 6px; border-top: 1px dotted #888; }
.tree .cur { color: #b00000; font-weight: bold; }

.content { flex: 1; min-width: 0; padding: 0 5px 5px; display: flex; background: linear-gradient(#fff, #fff) 10px 0 / calc(100% - 15px) calc(100% - 5px) no-repeat, #f8f8f8; }
.pane { position: relative; width: 1093px; padding-bottom: 14px; border: 1px solid #c8c8c8; border-top: 0; border-right: 2px solid #c0c0c4; background: #fff; }
.scenario { display: flex; gap: 4px; width: 472px; height: 27px; margin-left: 171px; padding-left: 8px; border: 1px solid #aaa; border-top: 0; border-radius: 0 0 6px 6px; overflow: hidden; }
.scenario svg { width: 16px; height: 16px; margin-top: -6px; }
.scenario ul { margin: -6px 0 0 28px; list-style: disc; }
.row { display: flex; align-items: center; height: 27px; padding-left: 20px; }
.label { width: 160px; height: 16px; margin-bottom: 6px; display: flex; align-items: center; flex: none; }
.label svg, h2 svg, .inject svg { width: 14px; height: 14px; margin-left: 1px; }
.line { height: 24px; }
.scene { margin-top: 13px; }
.scene .label { padding-left: 5px; margin-bottom: 2px; }
h2 { display: flex; align-items: center; height: 20px; margin: 0; padding-left: 4px; font-size: 12px; line-height: 20px; }
.num { width: 13px; height: 13px; margin: 0 3px 4px 0; font: 14px/12px "DejaVu Sans", sans-serif; color: #222; text-align: center; background: linear-gradient(#f4f4f4, #d4d4d4); border-radius: 2px; -webkit-text-stroke: 0; }
.s1 { margin: 10px 0 5px; }
.s2 { margin: 9px 0 4px; }
.s3 { margin: 19px 0 8px; }
.s4 { margin: 19px 0 15px; }
input[type=text], input[type=password], select { width: 192px; height: 22px; margin: 0; padding: 0 5px; border: 1px solid #b6b6ba; border-radius: 0; background: #fff; color: #000; font: inherit; }
input[type=password] { font-size: 19px; }
select { appearance: none; height: 23px; padding: 0 24px 0 6px; }
.sel { position: relative; display: flex; }
.sel svg { position: absolute; right: 3px; top: 3px; width: 17px; height: 17px; pointer-events: none; }
.second { margin-left: 23px !important; }
input[type=checkbox] { appearance: none; width: 14px; height: 14px; margin: 0 3px 0 0; border: 1px solid #b8b8bc; border-radius: 2px; background: #fff; }
input[type=radio] { appearance: none; width: 14px; height: 14px; margin: 0 9px 0 0; border: 1px solid #b0b0b0; border-radius: 50%; background: #fff; }
input[type=radio]:checked { background: radial-gradient(circle, #a00000 2px, #fff 4px); }
.req { width: 7px; margin-left: 2px; color: #e00; }
.link { color: #0a66f5; }
.req + .link { margin-left: 5px; }
.near { margin-left: 6px; }
.warn { width: 14px; height: 14px; margin: 0 1px 0 8px; }
.hint { height: 18px; margin-top: 6px; padding-left: 180px; line-height: 18px; }
.hint .link { margin-left: 3px; }
.radios { height: 18px; }
.radios .label { margin: 0; }
.radios label { display: flex; align-items: center; }
.radios .w1 { width: 127px; }
.radios .w2 { width: 115px; }
.psk { margin-top: 3px; }
.addrtype { height: 20px; }
.addrtype label { color: #999; }
.addrtype input { opacity: .6; }

.panel { width: 722px; margin: 10px 0 0 20px; padding: 0 5px 4px; border: 1px solid #d4d4d4; }
.tools { display: flex; gap: 8px; height: 31px; align-items: center; padding-left: 5px; }
.tools button { display: flex; align-items: center; gap: 2px; border: 0; padding: 0; background: none; }
.tools svg { width: 15px; height: 15px; }
.gridbody { min-height: 142px; }
table { width: 100%; table-layout: fixed; border-collapse: collapse; }
.c1 { width: 209px; } .c2 { width: 184px; } .c3 { width: 55px; } .c4 { width: 63px; } .c5 { width: 62px; } .c6 { width: 55px; } .c7 { width: 82px; }
thead { background: #e0e0e0; }
th { height: 30px; padding: 0; text-align: left; white-space: nowrap; }
th span { display: flex; align-items: center; height: 18px; padding-left: 5px; border-right: 1px solid #bbb; }
th .mid { padding-left: 29px; }
td { height: 28px; padding: 0 0 0 5px; background: #f7f7f7; white-space: nowrap; border-top: 1px solid #fff; }
td span { display: flex; align-items: center; }
th:first-child span { padding-left: 9px; }
td:first-child { padding-left: 9px; }
th input[type=checkbox], td input[type=checkbox] { margin-right: 6px; }
.green { color: #0c930c; }
.edit button { display: block; margin-left: 43px; padding: 0; border: 0; background: none; }
.edit svg { display: block; width: 16px; height: 16px; }
.total { height: 25px; padding-right: 28px; background: #e0e0e0; text-align: right; line-height: 28px; }
.inject { display: flex; align-items: center; height: 20px; margin: 8px 0 0 20px; }
.inject + h2 { margin-top: 20px; }
.adv { display: flex; align-items: center; gap: 5px; height: 20px; padding-left: 27px; font-weight: bold; }
.adv button { width: 14px; height: 14px; padding: 0; border: 1px solid #aaa; border-radius: 2px; background: #fff; display: flex; align-items: center; justify-content: center; }
.adv svg { width: 10px; height: 10px; }
.actions { position: relative; display: flex; gap: 3px; margin-top: 16px; padding-left: 473px; }
.actions button { width: 70px; height: 25px; border: 1px solid #a4a4a4; border-radius: 2px; background: linear-gradient(#eee, #dadada 4px); font-size: 13px; line-height: 20px; padding: 0; }
.mark { position: absolute; left: 473px; top: -18px; width: 54px; height: 58px; border: 3px solid #ff3b3b; }
.drawer { position: absolute; right: -1px; top: 216px; width: 27px; height: 50px; display: flex; flex-direction: column; align-items: center; gap: 9px; padding-top: 6px; background: #f0f0f0; border: 1px solid #aaa; box-shadow: 0 2px 3px rgba(0,0,0,.3); }

.scrollbar { width: 17px; display: flex; flex-direction: column; align-items: center; justify-content: space-between; background: #f0f0f0; }
.scrollbar i { width: 17px; flex: 1; margin-top: 127px; background: #cdcdcd; }
.scrollbar svg { width: 10px; height: 8px; margin: 5px 0; fill: none; stroke: #555; stroke-width: 2; }
.scrollbar svg:first-child { margin-bottom: 0; }
.ball { position: absolute; right: 101px; bottom: 79px; width: 48px; height: 48px; border: 2px solid #fff; border-radius: 50%; background: linear-gradient(45deg, #6cc8ff, #4a9dff 50%, #2f7dfb); color: #fff; font: 14px/44px "Open Sans", sans-serif; text-align: center; box-shadow: 0 1px 5px rgba(60,110,150,.5); }
.cli { position: absolute; right: 111px; bottom: 0; width: 80px; height: 22px; padding: 0; border: 1px solid #888; border-bottom: 0; border-radius: 4px 4px 0 0; background: #ececec; color: #b00000; font: bold 12px/20px "Open Sans", "Noto Sans CJK SC", sans-serif; }
.copyright { flex: none; height: 22px; border-top: 1px solid #222; color: #fff; line-height: 24px; text-align: center; overflow: hidden; }
.taskbar { flex: none; display: flex; height: 8px; padding-left: 148px; overflow: hidden; background: linear-gradient(90deg, #1e222d 65%, #454545 85%); }
.taskbar i { width: 48px; background: #4c4d56; }
.taskbar span { margin-left: auto; padding: 4px 74px 0 0; color: #fff; line-height: 14px; }
```
